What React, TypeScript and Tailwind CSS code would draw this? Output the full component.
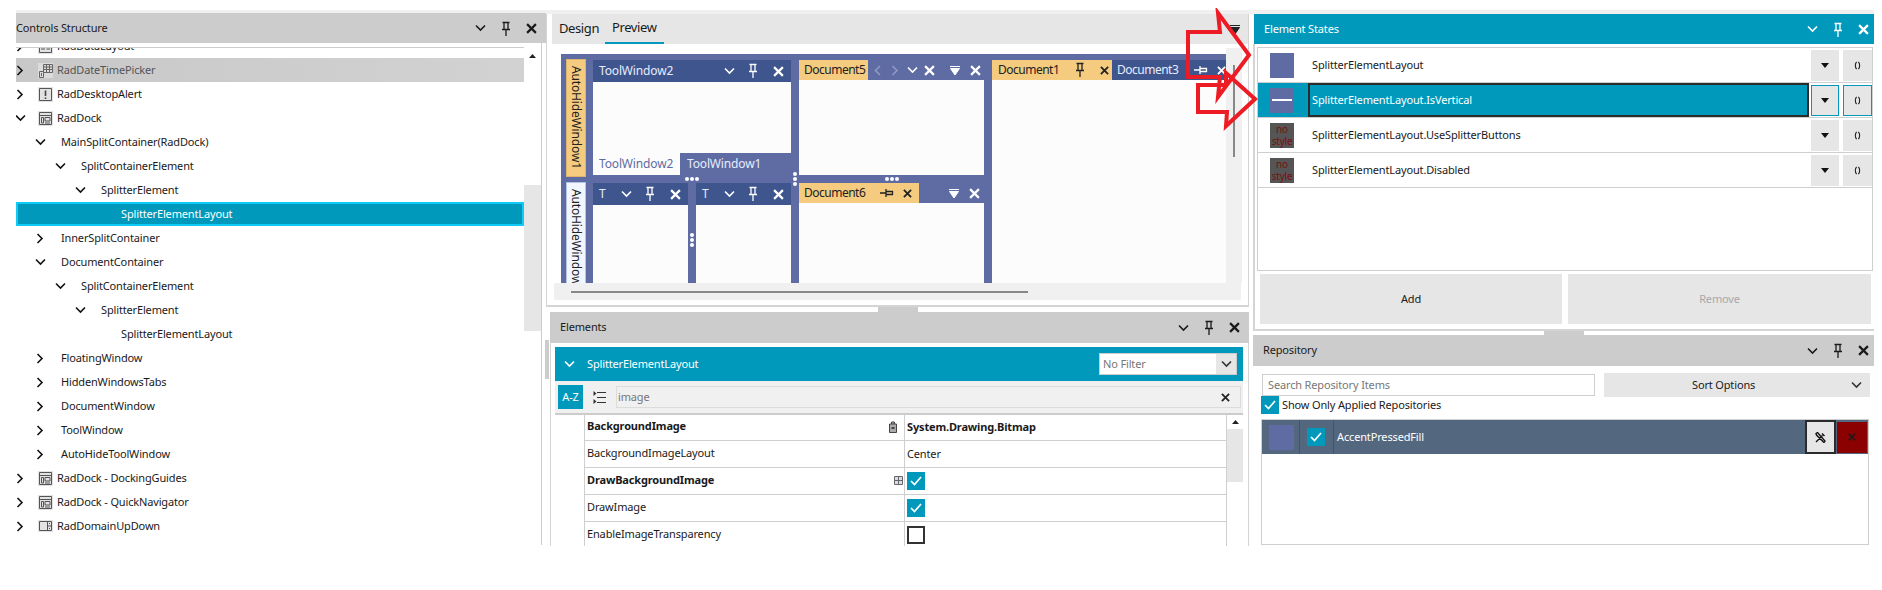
import React from "react";

const Chevron = ({ dir = "down", className = "" }: { dir?: "down" | "right" | "left"; className?: string }) => {
  const d = dir === "down" ? "M1 1.5 L5.5 6 L10 1.5" : dir === "right" ? "M1.5 1 L6 5.5 L1.5 10" : "M6 1 L1.5 5.5 L6 10";
  const w = dir === "down" ? 11 : 8;
  const h = dir === "down" ? 8 : 11;
  return (
    <svg width={w} height={h} viewBox={`0 0 ${w} ${h}`} className={`shrink-0 ${className}`}>
      <path d={d} fill="none" stroke="currentColor" strokeWidth="1.6" />
    </svg>
  );
};
const Pin = ({ className = "" }: { className?: string }) => (
  <svg width="10" height="15" viewBox="0 0 10 15" className={`shrink-0 ${className}`}>
    <path d="M1.5 1.5H8.5 M3 1.5V8 M7 1.5V8 M1 8.5H9 M5 8.5V15" fill="none" stroke="currentColor" strokeWidth="1.3" />
  </svg>
);
const PinH = ({ className = "" }: { className?: string }) => (
  <svg width="14" height="10" viewBox="0 0 14 10" className={`shrink-0 ${className}`}>
    <path d="M0 5H6 M6 1V9 M6 3.5H13 M6 6.5H13 M12.5 3V7" fill="none" stroke="currentColor" strokeWidth="1.3" />
  </svg>
);
const X = ({ className = "", size = 10 }: { className?: string; size?: number }) => (
  <svg width={size} height={size} viewBox="0 0 10 10" className={`shrink-0 ${className}`}>
    <path d="M1 1 L9 9 M9 1 L1 9" fill="none" stroke="currentColor" strokeWidth="2" />
  </svg>
);
const TriLine = ({ className = "" }: { className?: string }) => (
  <svg width="10" height="9" viewBox="0 0 10 9" className={`shrink-0 ${className}`}>
    <path d="M0 0.5H10 M0.5 2.5H9.5L5 9Z" fill="currentColor" stroke="currentColor" strokeWidth="1" />
  </svg>
);
const Tri = () => (
  <svg width="8" height="5" viewBox="0 0 8 5" className="shrink-0 text-[#111]">
    <path d="M0 0H8L4 5Z" fill="currentColor" />
  </svg>
);
const Parens = () => (
  <svg width="7" height="9" viewBox="0 0 7 9" className="shrink-0 text-[#222]">
    <path d="M2.6 0.8C0.9 2.8 0.9 6.2 2.6 8.2 M4.4 0.8C6.1 2.8 6.1 6.2 4.4 8.2" fill="none" stroke="currentColor" strokeWidth="1.1" />
  </svg>
);
const Check = ({ className = "" }: { className?: string }) => (
  <span className={`flex items-center justify-center bg-[#0099bc] shrink-0 ${className}`}>
    <svg width="12" height="10" viewBox="0 0 12 10">
      <path d="M1 5 L4.5 8.5 L11 1" fill="none" stroke="white" strokeWidth="1.7" />
    </svg>
  </span>
);

const DockIcon = () => (
  <svg width="15" height="15" viewBox="0 0 15 15" className="shrink-0">
    <rect width="15" height="15" fill="#e2e2e2" />
    <path d="M1.5 1.5H13.5V13.5H1.5Z M1.5 4.5H13.5 M3.5 6.5H5.5V12H3.5Z M7 6.5H12V10H7Z M7 12H12" fill="none" stroke="#555" strokeWidth="1" />
  </svg>
);
const AlertIcon = () => (
  <svg width="15" height="15" viewBox="0 0 15 15" className="shrink-0">
    <rect width="15" height="15" fill="#e2e2e2" />
    <path d="M1.5 1.5H13.5V13.5H1.5Z" fill="none" stroke="#555" />
    <path d="M7.5 3.5V9 M7.5 10.5V12" stroke="#444" strokeWidth="1.6" />
  </svg>
);
const DateIcon = () => (
  <svg width="15" height="15" viewBox="0 0 15 15" className="shrink-0">
    <rect width="15" height="15" fill="#dcdcdc" />
    <path d="M5.5 1.5H14.5V9.5H5.5Z M5.5 4H14.5 M8.5 1.5V9.5 M11.5 1.5V9.5 M5.5 6.5H14.5" fill="none" stroke="#666" />
    <path d="M1.5 8.5H5.5V14.5H1.5Z M3.5 10V13" fill="none" stroke="#666" />
  </svg>
);
const DomainIcon = () => (
  <svg width="15" height="12" viewBox="0 0 15 12" className="shrink-0">
    <rect width="15" height="12" fill="#e2e2e2" />
    <path d="M1.5 1.5H13.5V10.5H1.5Z M9.5 1.5V10.5 M9.5 6H13.5 M11 3.5H12 M11 8.5H12" fill="none" stroke="#555" />
  </svg>
);
const DataIcon = () => (
  <svg width="15" height="15" viewBox="0 0 15 15" className="shrink-0">
    <rect width="15" height="15" fill="#e2e2e2" />
    <path d="M1.5 1.5H13.5V13.5H1.5Z M3 10H7 M8.5 10H12" fill="none" stroke="#555" />
  </svg>
);

type TreeItem = { t: string; l: number; c?: "r" | "d"; i?: React.ReactNode; sel?: boolean; hov?: boolean };
const tree: TreeItem[] = [
  { t: "RadDataLayout", l: 0, c: "r", i: <DataIcon /> },
  { t: "RadDateTimePicker", l: 0, c: "r", i: <DateIcon />, hov: true },
  { t: "RadDesktopAlert", l: 0, c: "r", i: <AlertIcon /> },
  { t: "RadDock", l: 0, c: "d", i: <DockIcon /> },
  { t: "MainSplitContainer(RadDock)", l: 1, c: "d" },
  { t: "SplitContainerElement", l: 2, c: "d" },
  { t: "SplitterElement", l: 3, c: "d" },
  { t: "SplitterElementLayout", l: 4, sel: true },
  { t: "InnerSplitContainer", l: 1, c: "r" },
  { t: "DocumentContainer", l: 1, c: "d" },
  { t: "SplitContainerElement", l: 2, c: "d" },
  { t: "SplitterElement", l: 3, c: "d" },
  { t: "SplitterElementLayout", l: 4 },
  { t: "FloatingWindow", l: 1, c: "r" },
  { t: "HiddenWindowsTabs", l: 1, c: "r" },
  { t: "DocumentWindow", l: 1, c: "r" },
  { t: "ToolWindow", l: 1, c: "r" },
  { t: "AutoHideToolWindow", l: 1, c: "r" },
  { t: "RadDock - DockingGuides", l: 0, c: "r", i: <DockIcon /> },
  { t: "RadDock - QuickNavigator", l: 0, c: "r", i: <DockIcon /> },
  { t: "RadDomainUpDown", l: 0, c: "r", i: <DomainIcon /> },
];
const indents = ["w-0", "w-5", "w-10", "w-[60px]", "w-20"];

const TreeRow = ({ it }: { it: TreeItem }) => (
  <div
    className={`h-6 flex items-center ${it.sel ? "bg-[#0099bc] text-white ring-2 ring-inset ring-[#0fcbf5]" : it.hov ? "bg-gradient-to-r from-[#c8c8c8] to-[#d2d2d2] text-[#555]" : "text-[#1a1a1a]"}`}
  >
    <span className={`shrink-0 ${indents[it.l]}`} />
    <span className="w-2 flex justify-center shrink-0 text-[#111]">
      {it.c === "r" && <Chevron dir="right" />}
      {it.c === "d" && <Chevron dir="down" />}
    </span>
    {it.i ? (
      <>
        <span className="w-[15px] ml-[14px] shrink-0 flex justify-center">{it.i}</span>
        <span className="ml-1">{it.t}</span>
      </>
    ) : (
      <span className="ml-[17px]">{it.t}</span>
    )}
  </div>
);

const PanelHeader = ({ title, active, className = "" }: { title: string; active?: boolean; className?: string }) => (
  <div className={`flex items-center ${active ? "bg-[#0099bc] text-white" : "bg-[#cccccc] text-[#1a1a1a]"} ${className}`}>
    <span>{title}</span>
    <span className="flex-1" />
    <Chevron dir="down" />
    <Pin className="ml-[15px]" />
    <X size={11} className="ml-[15px]" />
  </div>
);

const Dots = ({ vertical }: { vertical?: boolean }) => (
  <span className={`flex gap-px ${vertical ? "flex-col" : ""}`}>
    <span className="w-1 h-1 rounded-full bg-white" />
    <span className="w-1 h-1 rounded-full bg-white" />
    <span className="w-1 h-1 rounded-full bg-white" />
  </span>
);

const ToolHead = ({ title, w }: { title: string; w: string }) => (
  <div className={`h-[22px] bg-[#3f558e] text-[#e6ecff] flex items-center shrink-0 pl-[6px] pr-[7px] ${w}`}>
    <span>{title}</span>
    <span className="flex-1" />
    <Chevron dir="down" className="text-white" />
    <Pin className="ml-[13px] text-white -mt-px" />
    <X size={11} className="ml-[15px] text-white" />
  </div>
);

const Preview = () => (
  <div className="w-[665px] h-[229px] bg-[#5e6ca3] overflow-hidden flex pl-[5px] text-[12px] shrink-0">
    <div className="w-[22px] mt-[5px] shrink-0">
      <div className="h-[118px] box-border bg-[#f4cb7f] border border-[#dcb46c] text-[#222] [writing-mode:vertical-rl] flex items-center pt-[6px]">
        AutoHideWindow1
      </div>
      <div className="h-[120px] mt-[5px] box-border bg-[#f2f6ff] border border-[#b4c4e4] text-[#222] [writing-mode:vertical-rl] flex items-center pt-[6px]">
        AutoHideWindow2
      </div>
    </div>
    {/* tool windows */}
    <div className="w-[198px] ml-[5px] mt-[6px] shrink-0">
      <ToolHead title="ToolWindow2" w="w-[198px]" />
      <div className="h-[71px] bg-[#fcfcfc]" />
      <div className="h-[22px] flex items-center">
        <span className="w-[87px] h-[22px] bg-[#fcfcfc] text-[#5e6ca3] pl-[6px] leading-[22px]">ToolWindow2</span>
        <span className="pl-[7px] text-[#e6ecff]">ToolWindow1</span>
      </div>
      <div className="h-2 flex items-center justify-center">
        <Dots />
      </div>
      <div className="flex">
        <div className="w-[95px] shrink-0">
          <ToolHead title="T" w="w-[95px]" />
          <div className="h-[80px] bg-[#fcfcfc]" />
        </div>
        <div className="w-2 flex justify-center pt-[50px] shrink-0">
          <Dots vertical />
        </div>
        <div className="w-[95px] shrink-0">
          <ToolHead title="T" w="w-[95px]" />
          <div className="h-[80px] bg-[#fcfcfc]" />
        </div>
      </div>
    </div>
    <div className="w-2 shrink-0 flex justify-center pt-[118px]">
      <Dots vertical />
    </div>
    {/* doc 5/6 */}
    <div className="w-[185px] mt-[6px] shrink-0">
      <div className="h-5 flex items-center">
        <span className="w-[69px] h-5 bg-[#f4cb7f] text-[#222] pl-[5px] leading-5 shrink-0 tracking-[-0.5px]">Document5</span>
        <Chevron dir="left" className="ml-[6px] text-[#8f9ac4]" />
        <Chevron dir="right" className="ml-[9px] text-[#8f9ac4]" />
        <Chevron dir="down" className="ml-[8px] text-white" />
        <X size={11} className="ml-[6px] text-white" />
        <TriLine className="ml-[15px] text-white" />
        <X size={11} className="ml-[10px] text-white" />
      </div>
      <div className="h-[95px] bg-[#fcfcfc]" />
      <div className="h-2 flex items-center justify-center">
        <Dots />
      </div>
      <div className="h-5 flex items-center">
        <span className="w-[120px] h-5 bg-[#f4cb7f] text-[#222] pl-[5px] leading-5 flex items-center shrink-0 tracking-[-0.5px]">
          Document6
          <PinH className="ml-[15px]" />
          <X size={9} className="ml-[9px]" />
        </span>
        <TriLine className="ml-[30px] text-white" />
        <X size={11} className="ml-[10px] text-white" />
      </div>
      <div className="h-[90px] bg-[#fcfcfc]" />
    </div>
    {/* doc 1/3 */}
    <div className="w-[234px] ml-2 mt-[6px] shrink-0">
      <div className="h-5 flex items-center">
        <span className="w-[120px] h-5 bg-[#f4cb7f] text-[#222] pl-[6px] leading-5 flex items-center shrink-0 tracking-[-0.5px]">
          Document1
          <Pin className="ml-4 -mt-0.5" />
          <X size={9} className="ml-[15px]" />
        </span>
        <span className="w-[114px] h-5 bg-[#3f558e] text-[#e6ecff] pl-[5px] leading-5 flex items-center shrink-0 tracking-[-0.5px]">
          Document3
          <PinH className="ml-4 text-white" />
          <X size={9} className="ml-[9px] text-white" />
        </span>
      </div>
      <div className="h-[210px] bg-[#fcfcfc]" />
    </div>
  </div>
);

const props = [
  { n: "BackgroundImage", b: true, v: "System.Drawing.Bitmap", ic: "clip" },
  { n: "BackgroundImageLayout", v: "Center" },
  { n: "DrawBackgroundImage", b: true, ck: true, ic: "grid" },
  { n: "DrawImage", ck: true },
  { n: "EnableImageTransparency", un: true },
];

const ElementsPanel = () => (
  <div className="h-[203px] ml-[4px] w-[699px] box-border border-l border-r border-[#d4d4d4] pl-1 pr-[5px] pt-1 overflow-hidden">
    <div className="h-[34px] bg-[#0099bc] text-white flex items-center">
      <Chevron dir="down" className="ml-[9px]" />
      <span className="ml-[12px]">SplitterElementLayout</span>
      <span className="flex-1" />
      <div className="w-[138px] h-[22px] box-border border border-[#cccccc] bg-white flex mr-[6px]">
        <span className="flex-1 text-[#777] pl-[3px] leading-5">No Filter</span>
        <span className="w-[20px] bg-[#e6e6e6] flex items-center justify-center text-[#333]">
          <Chevron dir="down" />
        </span>
      </div>
    </div>
    <div className="h-8 bg-[#f0f0f0] flex items-center">
      <span className="ml-[3px] w-[25px] h-6 bg-[#0099bc] text-white flex items-center justify-center">A-Z</span>
      <svg width="13" height="13" viewBox="0 0 13 13" className="ml-[10px] shrink-0">
        <path d="M4 1.5H13 M4 6.5H13 M4 11.5H13" stroke="#333" strokeWidth="1.2" />
        <path d="M0.5 0L3.5 2.5L0.5 5Z M0.5 8L3.5 10.5L0.5 13Z" fill="#333" />
      </svg>
      <div className="ml-[10px] w-[625px] h-[22px] box-border border border-[#dcdcdc] bg-[#f0f0f0] flex items-center text-[#777] pl-px pr-[10px]">
        <span className="flex-1">image</span>
        <X size={9} className="text-[#222]" />
      </div>
    </div>
    <div className="flex h-[133px] border-t-2 border-[#cccccc] box-border">
      <div className="w-[29px] shrink-0" />
      <div className="flex-1 -mt-px">
        {props.map((p) => (
          <div key={p.n} className={`h-[27px] box-border border-b border-[#cfcfcf] flex ${p.b ? "font-bold" : ""} text-[#1a1a1a]`}>
            <div className="w-[321px] box-border border-l border-r border-[#cfcfcf] pl-[2px] flex items-center shrink-0 pr-[1px] pb-px">
              <span className="flex-1">{p.n}</span>
              {p.ic === "clip" && (
                <svg width="10" height="12" viewBox="0 0 10 12" className="mr-[5px]">
                  <path d="M1.5 3H8.5V11.5H1.5Z M3.5 3V1H6.5V3" fill="#aaa" stroke="#444" />
                  <path d="M3.5 6H6.5V8H3.5Z" fill="#444" />
                </svg>
              )}
              {p.ic === "grid" && (
                <svg width="9" height="9" viewBox="0 0 9 9">
                  <path d="M0.5 0.5H8.5V8.5H0.5Z M4.5 0.5V8.5 M0.5 4.5H8.5" fill="#d8dcec" stroke="#666" />
                </svg>
              )}
            </div>
            <div className="flex-1 flex items-center pl-[2px]">
              {p.v}
              {p.ck && <Check className="w-[18px] h-[18px]" />}
              {p.un && <span className="w-[18px] h-[18px] box-border border-2 border-[#333] bg-white" />}
            </div>
          </div>
        ))}
      </div>
      <div className="w-[17px] shrink-0 border-l border-[#cfcfcf] box-border">
        <div className="h-[14px] flex items-center justify-center">
          <svg width="7" height="4" viewBox="0 0 7 4"><path d="M0 4H7L3.5 0Z" fill="#222" /></svg>
        </div>
        <div className="h-[53px] bg-[#e6e6e6]" />
      </div>
    </div>
  </div>
);

const states = [
  { t: "SplitterElementLayout", k: "fill" },
  { t: "SplitterElementLayout.IsVertical", k: "line", sel: true },
  { t: "SplitterElementLayout.UseSplitterButtons", k: "none" },
  { t: "SplitterElementLayout.Disabled", k: "none" },
];

const StateRow = ({ s }: { s: (typeof states)[number] }) => (
  <div className="h-[35px] box-border border-b border-[#cfcfcf] flex items-center">
    <div className={`w-[50px] h-[34px] flex items-center pl-3 shrink-0 ${s.sel ? "bg-[#0099bc]" : ""}`}>
      {s.k === "none" ? (
        <div className="w-6 h-[25px] bg-[#555555] text-[#7a1010] text-[10px] tracking-[-0.2px] leading-[12px] text-center whitespace-nowrap">
          no
          <br />
          style
        </div>
      ) : (
        <div className="w-6 h-[25px] bg-[#5e6ca3] flex items-center justify-center">
          {s.k === "line" && <span className="w-5 h-0.5 bg-white" />}
        </div>
      )}
    </div>
    <div
      className={`w-[501px] h-[34px] box-border flex items-center shrink-0 ${s.sel ? "bg-[#0099bc] border-2 border-[#2b2b2b] text-white pl-[2px]" : "pl-1 text-[#1a1a1a]"}`}
    >
      {s.t}
    </div>
    <div className={`w-[28px] h-[31px] box-border ml-[2px] bg-[#e6e6e6] flex items-center justify-center shrink-0 ${s.sel ? "border border-[#0099bc]" : ""}`}>
      <Tri />
    </div>
    <div className={`w-[29px] h-[31px] box-border ml-1 bg-[#e6e6e6] flex items-center justify-center shrink-0 ${s.sel ? "border border-[#0099bc]" : ""}`}>
      <Parens />
    </div>
  </div>
);

export default function App() {
  return (
    <div className="relative w-[1882px] h-[590px] bg-white overflow-hidden flex items-start pt-[10px] pl-4 font-['Noto_Sans',sans-serif] text-[11px] tracking-[-0.15px] leading-normal">
      {/* Left column */}
      <div className="w-[530px] h-[535px] shrink-0 relative">
        <div className="h-[3px] bg-[#f0f0f0]" />
        <PanelHeader title="Controls Structure" className="h-[30px] pr-[9px] pl-0" />
        <div className="flex">
          <div className="w-[508px] shrink-0">
            <div className="h-1" />
            <div className="h-[498px] border-t border-[#cccccc] overflow-hidden box-border">
              <div className="-mt-[14px]">
                {tree.map((it, i) => (
                  <TreeRow key={i} it={it} />
                ))}
              </div>
            </div>
          </div>
          <div className="w-[18px] h-[502px] shrink-0 box-border border-r border-[#cccccc]">
            <div className="h-[142px] flex justify-center items-start pt-[11px]">
              <svg width="7" height="4" viewBox="0 0 7 4"><path d="M0 4H7L3.5 0Z" fill="#222" /></svg>
            </div>
            <div className="h-[146px] bg-[#e6e6e6]" />
          </div>
        </div>
        <div className="absolute left-[529px] top-[330px] w-[4px] h-[39px] bg-[#cccccc]" />
      </div>

      {/* Center column */}
      <div className="w-[707px] h-[535px] shrink-0 box-border">
        <div className="h-1 bg-[#f0f0f0]" />
        <div className="w-[703px] h-[293px] box-border border-l border-r border-b-2 border-[#d4d4d4]">
          <div className="h-[30px] ml-[5px] bg-[#e6e6e6] flex items-stretch text-[13px] tracking-[-0.4px] text-[#1a1a1a]">
            <span className="pl-[7px] w-[53px] flex items-center">Design</span>
            <span className="w-[59px] pl-[7px] flex items-center border-b-2 border-[#0099bc]">Preview</span>
            <span className="flex-1" />
            <span className="flex items-center pr-2 text-[#222]"><TriLine /></span>
          </div>
          <div className="pl-[14px] pt-[10px] flex">
            <Preview />
            <div className="w-[16px] h-[235px] -mt-[6px] bg-[#f0f0f0] shrink-0 flex justify-center pt-[17px]">
              <div className="w-[2px] h-[92px] bg-[#888888]" />
            </div>
          </div>
          <div className="ml-[7px] w-[687px] h-[17px] bg-[#f0f0f0] flex items-center pl-[17px]">
            <div className="w-[457px] h-[2px] bg-[#888888]" />
          </div>
        </div>
        <div className="h-[5px] flex justify-center">
          <div className="w-10 h-[5px] bg-[#cccccc] mr-1" />
        </div>
        <PanelHeader title="Elements" className="h-[31px] ml-[4px] w-[699px] pl-[10px] pr-[9px]" />
        <ElementsPanel />
      </div>

      {/* Right column */}
      <div className="w-[621px] h-[535px] shrink-0">
        <div className="h-1 bg-[#f0f0f0]" />
        <PanelHeader title="Element States" active className="h-[30px] pl-[10px] pr-[5px] ml-px" />
        <div className="h-[287px] box-border border-l-2 border-b-2 border-[#d4d4d4]">
          <div className="h-[3px]" />
          <div className="ml-[2px] w-[616px] h-[224px] box-border border border-[#cfcfcf]">
            {states.map((s) => (
              <StateRow key={s.t} s={s} />
            ))}
          </div>
          <div className="flex mt-[3px] ml-[5px]">
            <div className="w-[302px] h-[50px] bg-[#e6e6e6] flex items-center justify-center text-[#1a1a1a]">Add</div>
            <div className="w-[303px] h-[50px] ml-[6px] bg-[#e6e6e6] flex items-center justify-center text-[#a8a8a8]">Remove</div>
          </div>
        </div>
        <div className="h-1 flex justify-center">
          <div className="w-10 h-1 bg-[#cccccc]" />
        </div>
        <PanelHeader title="Repository" className="h-[31px] pl-[10px] pr-[5px]" />
        <div className="pl-2">
          <div className="flex items-center h-6 mt-[7px]">
            <div className="w-[333px] h-[22px] ml-px box-border border border-[#cfcfcf] text-[#777] pl-[5px] leading-5">Search Repository Items</div>
            <div className="w-[266px] h-6 ml-[9px] bg-[#e6e6e6] flex items-center pr-2 pl-[88px] text-[#1a1a1a]">
              <span className="flex-1">Sort Options</span>
              <Chevron dir="down" className="text-[#333]" />
            </div>
          </div>
          <div className="flex items-center -mt-px h-[18px]">
            <Check className="w-[18px] h-[18px]" />
            <span className="ml-[3px] text-[#1a1a1a]">Show Only Applied Repositories</span>
          </div>
          <div className="mt-[5px] w-[608px] h-[126px] box-border border border-[#cfcfcf]">
            <div className="h-[34px] bg-[#53687f] flex items-center text-white">
              <div className="w-[25px] h-[25px] ml-[7px] bg-[#5e6ca3] shrink-0" />
              <div className="w-px h-[34px] ml-[5px] bg-[#7d3a50] shrink-0" />
              <Check className="w-[18px] h-[18px] ml-[7px]" />
              <div className="w-px h-[34px] ml-2 bg-[#7d3a50] shrink-0" />
              <span className="ml-[3px] flex-1">AccentPressedFill</span>
              <div className="w-[31px] h-[34px] box-border border-2 border-[#2b2b2b] bg-[#e6e6e6] flex items-center justify-center shrink-0">
                <svg width="11" height="11" viewBox="0 0 11 11">
                  <path d="M1 10L7.5 3.5 M7 1.5L9.5 4 M1 1.5L2.5 0.5L10 9L9 10.5L1.5 3Z" fill="none" stroke="#111" strokeWidth="1.4" />
                </svg>
              </div>
              <div className="w-[30px] h-[31px] ml-px bg-[#8b0000] flex items-center justify-center text-[#1a1a1a] shrink-0 mr-px">
                <X size={8} />
              </div>
            </div>
          </div>
        </div>
      </div>

      {/* Red annotation arrows */}
      <svg width="80" height="125" viewBox="1185 8 80 125" className="absolute left-[1185px] top-[8px] pointer-events-none">
        <path d="M1188 32H1220L1218 13L1249 55L1218 97L1220 77H1188Z" fill="none" stroke="#ed1c24" strokeWidth="4" />
        <path d="M1198 85H1226L1226 73L1255 99L1226 126L1227 112H1198Z" fill="none" stroke="#ed1c24" strokeWidth="4" />
      </svg>
    </div>
  );
}
